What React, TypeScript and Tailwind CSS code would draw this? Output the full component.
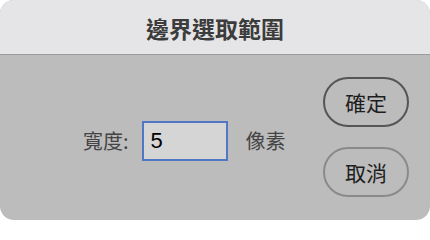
import React from "react";

export default function App() {
  const font = { fontFamily: '"Noto Sans CJK TC", "Noto Sans", sans-serif' };
  return (
    <div className="w-[430px] h-[220px] bg-white" style={font}>
      <div className="w-[430px] h-[220px] rounded-[14px] overflow-hidden flex flex-col bg-[#bcbcbc]">
        <div className="h-[55px] bg-[#e5e5e7] border-b border-[#9c9c9c] flex items-center justify-center">
          <span className="text-[23px] font-bold text-[#3c3c3c] leading-none mt-[3px]">邊界選取範圍</span>
        </div>
        <div className="flex-1 flex">
          <div className="flex-1 flex items-center pl-[83px] pt-[6px]">
            <span className="text-[20px] text-[#444] leading-none">寬度:</span>
            <div className="ml-[13px] w-[86px] h-[40px] bg-[#d5d5d6] border-2 border-[#5078c4] flex items-center pl-[7px]">
              <span className="text-[22px] text-black leading-none" style={{ fontFamily: '"Liberation Sans", sans-serif' }}>5</span>
            </div>
            <span className="ml-[18px] text-[20px] text-[#444] leading-none">像素</span>
          </div>
          <div className="w-[107px] flex flex-col pt-[22px] gap-[20px]">
            <div className="w-[86px] h-[50px] rounded-full border-2 border-[#555555] flex items-center justify-center">
              <span className="text-[21px] text-[#1e1e1e] leading-none">確定</span>
            </div>
            <div className="w-[86px] h-[50px] rounded-full border-2 border-[#8a8a8a] flex items-center justify-center">
              <span className="text-[21px] text-[#1e1e1e] leading-none">取消</span>
            </div>
          </div>
        </div>
      </div>
    </div>
  );
}
